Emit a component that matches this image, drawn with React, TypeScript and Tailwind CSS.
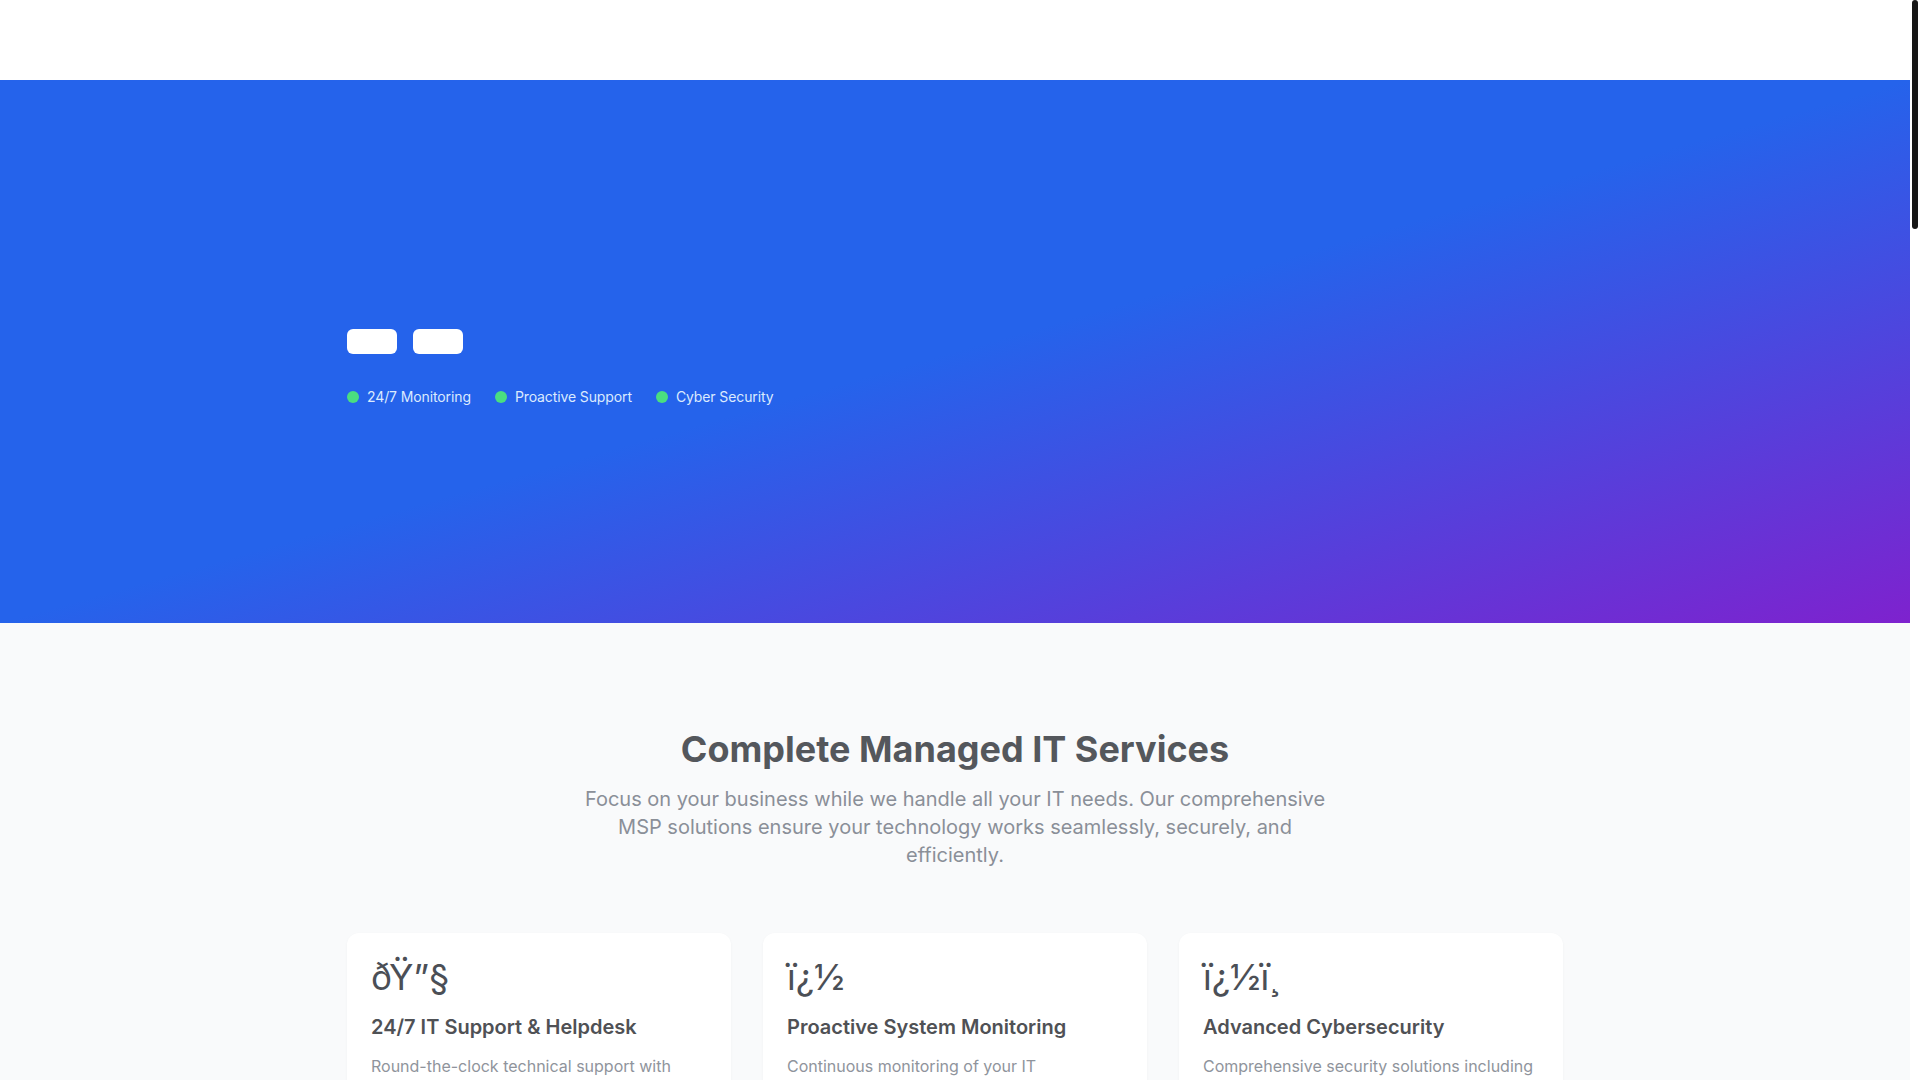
import React from 'react';

const badges = ['24/7 Monitoring', 'Proactive Support', 'Cyber Security'];

const services = [
    {
        icon: 'ðŸ”§',
        title: '24/7 IT Support & Helpdesk',
        text: 'Round-the-clock technical support with 24/7 helpdesk availability, remote troubleshooting and fast on-site response when you need it.'
    },
    {
        icon: 'ï¿½',
        title: 'Proactive System Monitoring',
        text: 'Continuous monitoring of your IT infrastructure to detect and resolve issues before they impact your business operations.'
    },
    {
        icon: 'ï¿½ï¸',
        title: 'Advanced Cybersecurity',
        text: 'Comprehensive security solutions including firewall management, threat detection, endpoint protection and security audits.'
    },
    {
        icon: 'â˜ï¸',
        title: 'Cloud Services & Migration',
        text: 'Seamless migration to cloud platforms with ongoing management, optimization and cost control for your cloud environment.'
    },
    {
        icon: 'ðŸ’¾',
        title: 'Backup & Disaster Recovery',
        text: 'Automated backups and tested recovery plans so your data stays safe and your business keeps running no matter what.'
    },
    {
        icon: 'ðŸŒ',
        title: 'Network Management',
        text: 'Design, deployment and maintenance of reliable, high-performance networks for offices of every size.'
    }
];

const stats = [
    { value: '500+', label: 'Clients Served' },
    { value: '99.9%', label: 'Uptime Guarantee' },
    { value: '15min', label: 'Average Response' },
    { value: '24/7', label: 'Support Coverage' }
];

const steps = [
    { title: 'Assessment', text: 'We review your current IT environment, risks and business goals.' },
    { title: 'Planning', text: 'A tailored roadmap is built around your budget and priorities.' },
    { title: 'Onboarding', text: 'Our team deploys monitoring, security and support tooling.' },
    { title: 'Ongoing Care', text: 'Continuous management, reporting and strategic reviews.' }
];

const ServiceCard: React.FC<{ icon: string; title: string; text: string }> = ({ icon, title, text }) => (
    <div className="bg-white rounded-xl p-6 shadow-[0_1px_3px_rgba(0,0,0,0.04)]">
        <div className="text-4xl text-[#4b4f56] mb-4">{icon}</div>
        <h3 className="text-xl font-semibold text-[#4f5155] mb-3">{title}</h3>
        <p className="text-base leading-relaxed text-[#8f949c]">{text}</p>
    </div>
);

export default function App() {
    return (
        <div className="flex h-screen bg-[#f9fafb] font-['Inter','Noto_Sans',sans-serif]">
            <main className="flex-1 min-w-0 overflow-y-auto [scrollbar-width:none]">
                <header className="h-20 bg-white" />

                <section className="h-[543px] bg-linear-to-br/srgb from-[#2563eb] via-[#2563eb] to-[#7e22ce]">
                    <div className="max-w-7xl mx-auto px-8 pt-[249px]">
                        <div className="flex gap-4">
                            <button className="w-[50px] h-[25px] rounded-md bg-white" />
                            <button className="w-[50px] h-[25px] rounded-md bg-white" />
                        </div>
                        <div className="flex items-center gap-6 mt-[33px]">
                            {badges.map(b => (
                                <div key={b} className="flex items-center gap-2 text-sm tracking-[-0.008em] text-[#dbeafe]">
                                    <span className="w-3 h-3 rounded-full bg-[#4ade80]" />
                                    {b}
                                </div>
                            ))}
                        </div>
                    </div>
                </section>

                <section className="pt-[106px] pb-24">
                    <div className="max-w-7xl mx-auto px-8">
                        <div className="text-center mb-16">
                            <h2 className="text-4xl font-bold text-[#54575c] mb-4">Complete Managed IT Services</h2>
                            <p className="text-xl text-[#8a8f98] max-w-3xl mx-auto">
                                Focus on your business while we handle all your IT needs. Our comprehensive MSP solutions ensure your technology works seamlessly, securely, and efficiently.
                            </p>
                        </div>
                        <div className="grid grid-cols-3 gap-8">
                            {services.map(s => <ServiceCard key={s.title} {...s} />)}
                        </div>
                    </div>
                </section>

                <section className="py-24 bg-white">
                    <div className="max-w-7xl mx-auto px-8 grid grid-cols-4 gap-8 text-center">
                        {stats.map(s => (
                            <div key={s.label}>
                                <div className="text-5xl font-bold text-[#2563eb] mb-2">{s.value}</div>
                                <div className="text-lg text-gray-500">{s.label}</div>
                            </div>
                        ))}
                    </div>
                </section>

                <section className="py-24">
                    <div className="max-w-7xl mx-auto px-8">
                        <div className="text-center mb-16">
                            <h2 className="text-4xl font-bold text-[#54575c] mb-4">How We Work</h2>
                            <p className="text-xl text-[#8a8f98] max-w-3xl mx-auto">A simple, transparent process to get your business running on reliable technology.</p>
                        </div>
                        <div className="grid grid-cols-4 gap-8">
                            {steps.map((s, i) => (
                                <div key={s.title} className="bg-white rounded-xl p-8 shadow-[0_1px_3px_rgba(0,0,0,0.04)] h-[260px]">
                                    <div className="w-12 h-12 rounded-full bg-[#2563eb] text-white flex items-center justify-center text-xl font-bold mb-6">{i + 1}</div>
                                    <h3 className="text-xl font-semibold text-[#4f5155] mb-3">{s.title}</h3>
                                    <p className="text-base leading-relaxed text-[#8f949c]">{s.text}</p>
                                </div>
                            ))}
                        </div>
                    </div>
                </section>

                <section className="py-24 bg-white">
                    <div className="max-w-4xl mx-auto px-8 text-center h-[1500px]">
                        <h2 className="text-4xl font-bold text-[#54575c] mb-4">What Our Clients Say</h2>
                        <p className="text-xl text-[#8a8f98]">Trusted by businesses across every industry.</p>
                    </div>
                </section>

                <section className="py-24 bg-linear-to-br/srgb from-[#2563eb] to-[#7e22ce]">
                    <div className="max-w-3xl mx-auto px-8 text-center h-[300px]">
                        <h2 className="text-4xl font-bold text-white mb-4">Ready to Get Started?</h2>
                        <p className="text-xl text-[#dbeafe]">Contact us today for a free IT assessment.</p>
                    </div>
                </section>

                <footer className="bg-gray-900 py-16">
                    <div className="max-w-7xl mx-auto px-8 h-[300px] text-gray-400 text-sm">© 2024 Managed IT Services. All rights reserved.</div>
                </footer>
            </main>

            {/* page scrollbar */}
            <div className="w-[10px] shrink-0 bg-white">
                <div className="mx-auto w-[6px] h-[229px] rounded-full bg-[#161616]" />
            </div>
        </div>
    );
}
